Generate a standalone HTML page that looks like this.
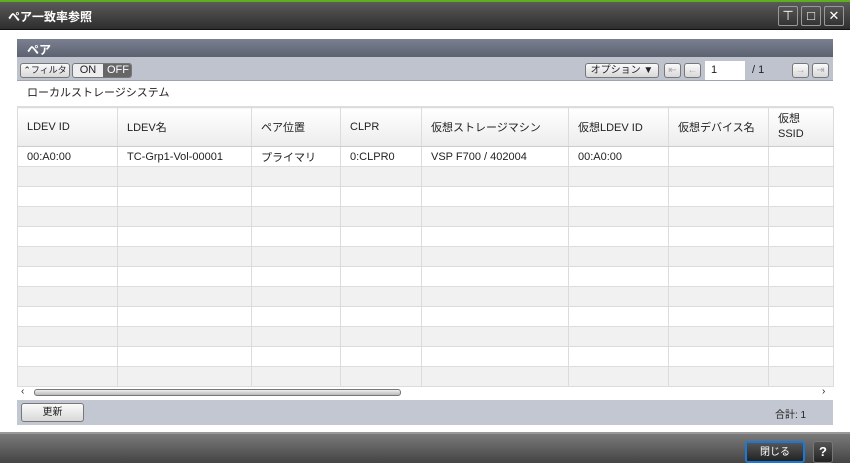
<!DOCTYPE html>
<html><head><meta charset="utf-8"><style>
*{box-sizing:border-box;margin:0;padding:0}
body{width:850px;height:463px;background:#fff;font-family:"Liberation Sans","Noto Sans CJK JP",sans-serif;font-size:11px;color:#222;position:relative;overflow:hidden}
.abs{position:absolute}
#title{left:0;top:0;width:850px;height:30px;background:linear-gradient(#5a5a5a,#2e2e2e);border-top:2px solid #5fae1e;border-bottom:1px solid #111}
#title span{position:absolute;left:8px;top:6px;color:#fff;font-weight:bold;font-size:12px}
.tb{top:6px;width:20px;height:20px;border:1px solid #999;background:linear-gradient(#555,#333);color:#fff;font-size:13px;text-align:center;line-height:18px;border-radius:2px}
#ph{left:17px;top:39px;width:816px;height:18px;background:linear-gradient(#7a8090,#5c6270);color:#fff;font-weight:bold;font-size:12px;padding:2px 10px}
#tool{left:17px;top:57px;width:816px;height:24px;background:#bfc3cd;border-bottom:1px solid #a0a4ad}
.btn{position:absolute;border:1px solid #777;border-radius:3px;background:linear-gradient(#fafafa,#d8d8d8);font-size:10px;text-align:center;white-space:nowrap;overflow:hidden}
#loc{left:17px;top:81px;width:816px;height:26px;line-height:24px;padding:0 10px;border-bottom:1px solid #ddd}
table{position:absolute;left:17px;top:107px;border-collapse:collapse;width:816px;table-layout:fixed}
td{border:1px solid #dcdcdc;height:20px;padding:0 9px;font-size:11px;white-space:nowrap;overflow:hidden}
tr.h td{height:39px;background:linear-gradient(#fff,#ececec);border-bottom:1px solid #ccc}
tr:nth-child(odd):not(.h) td{background:#f1f1f1}
#scr{left:17px;top:386px;width:816px;height:14px}
#foot{left:17px;top:400px;width:816px;height:25px;background:#c3c7d1}
#bot{left:0;top:432px;width:850px;height:31px;background:linear-gradient(#7a7a7a,#444);border-top:2px solid #999}
</style></head><body>
<div id="title" class="abs"><span>ペア一致率参照</span></div>
<div class="abs tb" style="left:778px">⊤</div>
<div class="abs tb" style="left:801px">□</div>
<div class="abs tb" style="left:824px">✕</div>
<div id="ph" class="abs">ペア</div>
<div id="tool" class="abs">
 <div class="btn" style="left:3px;top:6px;width:50px;height:15px;line-height:13px;font-size:9px">⌃フィルタ</div>
 <div class="btn" style="left:55px;top:6px;width:60px;height:15px;font-size:11px;background:#eee"><span class="abs" style="left:0;top:0;width:30px;height:13px;line-height:13px">ON</span><span class="abs" style="left:30px;top:0;width:30px;height:13px;line-height:13px;background:#666;color:#fff">OFF</span></div>
 <div class="btn" style="left:568px;top:6px;width:74px;height:15px;line-height:13px">オプション ▼</div>
 <div class="btn" style="left:647px;top:6px;width:17px;height:15px;color:#aaa;line-height:13px">⇤</div>
 <div class="btn" style="left:667px;top:6px;width:17px;height:15px;color:#aaa;line-height:13px">←</div>
 <div class="abs" style="left:688px;top:4px;width:40px;height:19px;background:#fff;padding:3px 6px">1</div>
 <div class="abs" style="left:735px;top:7px">/ 1</div>
 <div class="btn" style="left:775px;top:6px;width:17px;height:15px;color:#aaa;line-height:13px">→</div>
 <div class="btn" style="left:795px;top:6px;width:17px;height:15px;color:#aaa;line-height:13px">⇥</div>
</div>
<div id="loc" class="abs">ローカルストレージシステム</div>
<table>
<colgroup><col style="width:100px"><col style="width:134px"><col style="width:89px"><col style="width:81px"><col style="width:147px"><col style="width:100px"><col style="width:100px"><col style="width:65px"></colgroup>
<tr class="h"><td>LDEV ID</td><td>LDEV名</td><td>ペア位置</td><td>CLPR</td><td>仮想ストレージマシン</td><td>仮想LDEV ID</td><td>仮想デバイス名</td><td style="line-height:15px">仮想<br>SSID</td></tr>
<tr><td>00:A0:00</td><td>TC-Grp1-Vol-00001</td><td>プライマリ</td><td>0:CLPR0</td><td>VSP F700 / 402004</td><td>00:A0:00</td><td></td><td></td></tr>
<tr><td></td><td></td><td></td><td></td><td></td><td></td><td></td><td></td></tr>
<tr><td></td><td></td><td></td><td></td><td></td><td></td><td></td><td></td></tr>
<tr><td></td><td></td><td></td><td></td><td></td><td></td><td></td><td></td></tr>
<tr><td></td><td></td><td></td><td></td><td></td><td></td><td></td><td></td></tr>
<tr><td></td><td></td><td></td><td></td><td></td><td></td><td></td><td></td></tr>
<tr><td></td><td></td><td></td><td></td><td></td><td></td><td></td><td></td></tr>
<tr><td></td><td></td><td></td><td></td><td></td><td></td><td></td><td></td></tr>
<tr><td></td><td></td><td></td><td></td><td></td><td></td><td></td><td></td></tr>
<tr><td></td><td></td><td></td><td></td><td></td><td></td><td></td><td></td></tr>
<tr><td></td><td></td><td></td><td></td><td></td><td></td><td></td><td></td></tr>
<tr><td></td><td></td><td></td><td></td><td></td><td></td><td></td><td></td></tr>
</table>
<div id="scr" class="abs">
 <span class="abs" style="left:4px;top:0;font-size:10px">‹</span>
 <div class="abs" style="left:17px;top:3px;width:367px;height:7px;border:1px solid #777;border-radius:3px;background:linear-gradient(#eee,#bbb)"></div>
 <span class="abs" style="left:805px;top:0;font-size:10px">›</span>
</div>
<div id="foot" class="abs">
 <div class="btn" style="left:4px;top:3px;width:63px;height:19px;line-height:17px">更新</div>
 <div class="abs" style="left:758px;top:6px;font-size:10px">合計: 1</div>
</div>
<div id="bot" class="abs">
 <div class="btn" style="left:745px;top:7px;width:60px;height:22px;line-height:19px;border:2px solid #1a78d8;background:linear-gradient(#555,#222);color:#fff">閉じる</div>
 <div class="btn" style="left:813px;top:7px;width:20px;height:22px;line-height:20px;background:linear-gradient(#555,#222);color:#fff;font-weight:bold;font-size:13px">?</div>
</div>
</body></html>
